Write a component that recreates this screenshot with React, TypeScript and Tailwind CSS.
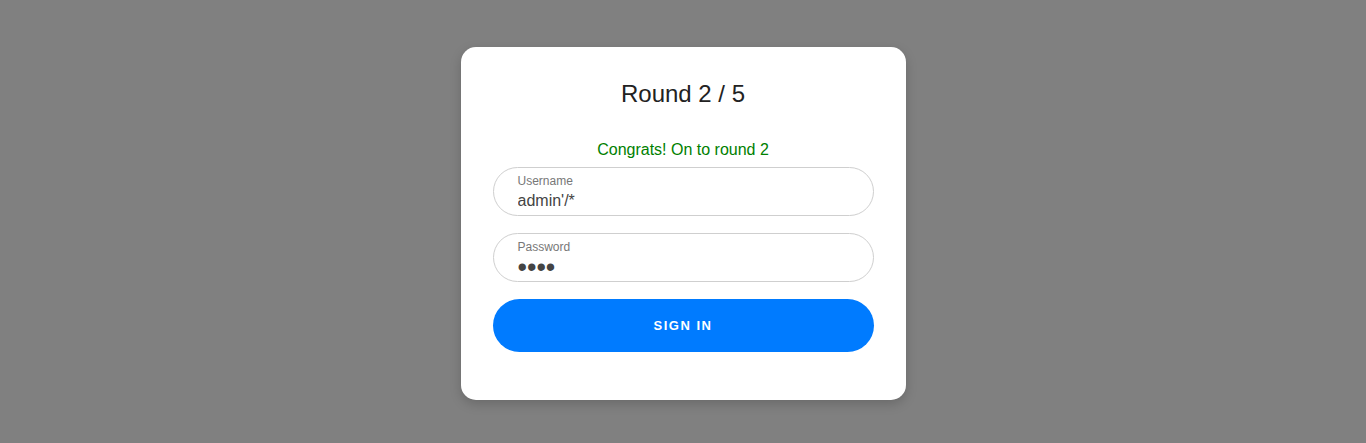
import React, { useState } from 'react';

const App = () => {
  const [username, setUsername] = useState("admin'/*");
  const [password, setPassword] = useState('abcd');

  return (
    <div
      className="min-h-screen w-full bg-[#808080] flex justify-center pt-[47px]"
      style={{ fontFamily: '"Liberation Sans", Arial, sans-serif' }}
    >
      <div className="w-[445px] h-[353px] bg-white rounded-[15px] shadow-[0_4px_12px_rgba(0,0,0,0.18)] px-8 pt-[33px]">
        <h1 className="text-center text-[24px] leading-[27px] text-[#222]">Round 2 / 5</h1>

        <p className="mt-[34px] text-center text-[16px] leading-[18px] text-[#008000]">
          Congrats! On to round 2
        </p>

        <form className="mt-[8px] flex flex-col gap-[17px]" onSubmit={e => e.preventDefault()}>
          <label className="block h-[49px] rounded-full border border-[#cfcfcf] px-6 pt-[6px]">
            <span className="block text-[12px] leading-[14px] text-[#777]">Username</span>
            <input
              type="text"
              value={username}
              onChange={e => setUsername(e.target.value)}
              className="mt-[4px] block w-full bg-transparent text-[16px] leading-[18px] text-[#444] outline-none p-0"
            />
          </label>

          <label className="block h-[49px] rounded-full border border-[#cfcfcf] px-6 pt-[6px]">
            <span className="block text-[12px] leading-[14px] text-[#777]">Password</span>
            <input
              type="password"
              value={password}
              onChange={e => setPassword(e.target.value)}
              className="mt-[4px] block h-[18px] w-full bg-transparent text-[27px] leading-[18px] text-[#444] outline-none p-0"
            />
          </label>

          <button
            type="submit"
            className="h-[53px] w-full rounded-full bg-[#007bff] text-white text-[13px] font-bold tracking-[1.5px] uppercase"
          >
            Sign in
          </button>
        </form>
      </div>
    </div>
  );
};

export default App;
